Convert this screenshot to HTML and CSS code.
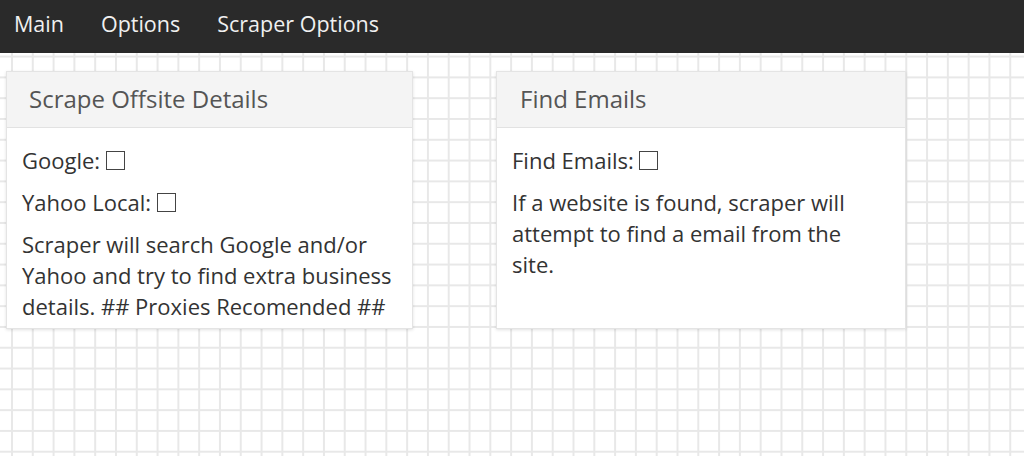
FILE: index.html
```html
<!DOCTYPE html>
<html lang="en">
    <head>
        <meta charset="UTF-8" />
        <meta name="viewport" content="width=device-width, initial-scale=1.0" />
        <title>Scraper</title>
        <link rel="stylesheet" href="styles.css">
    </head>

    <body>
        <nav class="topnav">
            <a href="#">Main</a>
            <a href="#">Options</a>
            <a href="#">Scraper Options</a>
        </nav>

        <div class="panels">
            <section class="panel panel--left">
                <h2 class="panel__title">Scrape Offsite Details</h2>
                <div class="panel__body">
                    <p class="field">Google: <span class="check"></span></p>
                    <p class="field">Yahoo Local: <span class="check"></span></p>
                    <p>Scraper will search Google and/or Yahoo and try to find extra business details. ## Proxies Recomended ##</p>
                </div>
            </section>

            <section class="panel panel--right">
                <h2 class="panel__title">Find Emails</h2>
                <div class="panel__body">
                    <p class="field">Find Emails: <span class="check"></span></p>
                    <p>If a website is found, scraper will attempt to find a email from the site.</p>
                </div>
            </section>
        </div>
    </body>
</html>
```

FILE: styles.css
```css
html {
    box-sizing: border-box;
    font-size: 16px;
}

*,
*:before,
*:after {
    box-sizing: inherit;
}

body,
h1,
h2,
p {
    margin: 0;
    padding: 0;
    font-weight: normal;
}

body {
    font-family: "Open Sans", "Noto Sans", sans-serif;
    color: #333;
    min-height: 456px;
    background-color: #fff;
    background-image:
        linear-gradient(to right, #e8e8e8 2px, transparent 2px),
        linear-gradient(to bottom, #e8e8e8 2px, transparent 2px);
    background-size: 20.8px 20.8px;
    background-position: 11px 14px;
}

.topnav {
    display: flex;
    height: 53px;
    align-items: center;
    padding: 0 0 6px 14px;
    background: #2a2a2a;
}

.topnav a {
    color: #f0f0f0;
    text-decoration: none;
    font-size: 21.5px;
    margin-right: 37px;
}

.panels {
    display: flex;
    align-items: stretch;
    padding: 18px 0 0 6px;
}

.panel {
    background: #fff;
    border: 1px solid #e4e4e4;
    box-shadow: 0 1px 3px rgba(0, 0, 0, 0.12);
}

.panel--left {
    width: 407px;
    margin-right: 83px;
}

.panel--right {
    width: 410px;
}

.panel__title {
    height: 56px;
    display: flex;
    align-items: center;
    padding: 0 0 2px 22px;
    background: #f4f4f4;
    border-bottom: 1px solid #e2e2e2;
    color: #555;
    font-size: 24px;
}

.panel--right .panel__title {
    padding-left: 23px;
}

.panel__body {
    padding: 17px 14px 6px 15px;
    font-size: 22px;
    line-height: 31px;
}

.panel--right .panel__body {
    padding-right: 22px;
}

.field {
    margin-bottom: 11px;
}

.check {
    display: inline-block;
    width: 19px;
    height: 19px;
    border: 1.5px solid #444;
    vertical-align: -1px;
}
```
